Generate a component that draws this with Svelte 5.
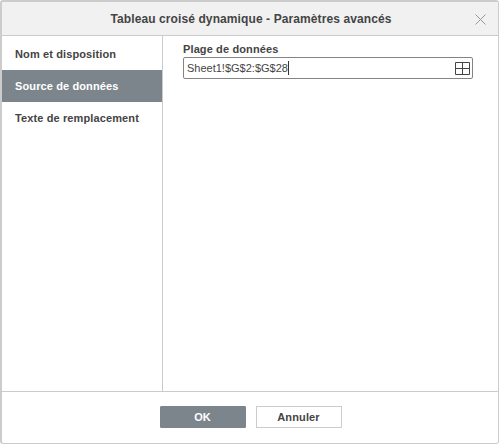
<script>
  const tabs = ['Nom et disposition', 'Source de données', 'Texte de remplacement'];
  let active = 1;
</script>

<div class="window">
  <div class="header">
    <span class="title">Tableau croisé dynamique - Paramètres avancés</span>
    <svg class="close" viewBox="0 0 11 11" width="11" height="11">
      <path d="M.5.5l10 10M10.5.5l-10 10" stroke="#989898" stroke-width="1" fill="none" />
    </svg>
  </div>
  <div class="body">
    <div class="sidebar">
      {#each tabs as tab, i}
        <button class="tab" class:active={active == i} on:click={() => (active = i)}>{tab}</button>
      {/each}
    </div>
    <div class="content">
      <div class="label">Plage de données</div>
      <div class="input">
        <span class="value">Sheet1!$G$2:$G$28</span><span class="caret"></span>
        <svg class="grid" viewBox="0 0 15 13" width="15" height="13">
          <path d="M.5.5h14v12H.5zM7.5.5v12M.5 6.5h14" stroke="#444" stroke-width="1" fill="none" />
        </svg>
      </div>
    </div>
  </div>
  <div class="footer">
    <button class="btn primary">OK</button>
    <button class="btn">Annuler</button>
  </div>
</div>

<style>
  :global(body) {
    margin: 0;
    background: #fff;
  }

  .window {
    box-sizing: border-box;
    width: 499px;
    height: 444px;
    display: flex;
    flex-direction: column;
    border: solid #ccc;
    border-width: 2px 1px 1px 2px;
    border-radius: 3px;
    font-family: "Liberation Sans", Arial, sans-serif;
    font-size: 11px;
    color: #444;
  }

  .header {
    flex: none;
    height: 33px;
    display: flex;
    align-items: center;
    justify-content: center;
    position: relative;
    background: #f1f1f1;
    border-bottom: 1px solid #cbcbcb;
  }

  .title {
    font-size: 12px;
    font-weight: bold;
    letter-spacing: 0.1px;
    margin-left: 2px;
  }

  .close {
    position: absolute;
    right: 12px;
    top: 12px;
  }

  .body {
    flex: 1;
    display: flex;
    min-height: 0;
  }

  .sidebar {
    flex: none;
    width: 160px;
    padding-top: 2px;
    display: flex;
    flex-direction: column;
    border-right: 1px solid #cbcbcb;
  }

  .tab {
    height: 32px;
    padding: 0 0 0 13px;
    border: none;
    background: none;
    font: bold 11px "Liberation Sans", Arial, sans-serif;
    letter-spacing: 0.12px;
    color: #444;
    text-align: left;
  }

  .tab.active {
    background: #7d858c;
    color: #fff;
  }

  .content {
    flex: 1;
    padding: 6px 25px 0 20px;
  }

  .label {
    font-weight: bold;
    letter-spacing: 0.12px;
    line-height: 14px;
    margin-bottom: 1px;
  }

  .input {
    box-sizing: border-box;
    height: 22px;
    display: flex;
    align-items: center;
    padding: 0 1px 0 3px;
    border: 1px solid #848484;
    border-radius: 2px;
    color: #444;
  }

  .caret {
    width: 1px;
    height: 14px;
    background: #333;
  }

  .grid {
    margin-left: auto;
    margin-right: 1px;
  }

  .footer {
    flex: none;
    height: 52px;
    display: flex;
    justify-content: center;
    gap: 10px;
    padding: 14px 0 0 1px;
    box-sizing: border-box;
    border-top: 1px solid #cbcbcb;
  }

  .btn {
    box-sizing: border-box;
    width: 86px;
    height: 22px;
    padding: 0;
    border: 1px solid #cfcbcb;
    background: #fff;
    font: bold 11px "Liberation Sans", Arial, sans-serif;
    letter-spacing: 0.12px;
    color: #444;
  }

  .btn.primary {
    background: #7d858c;
    border-color: #7d858c;
    border-radius: 1px;
    color: #fff;
  }
</style>
